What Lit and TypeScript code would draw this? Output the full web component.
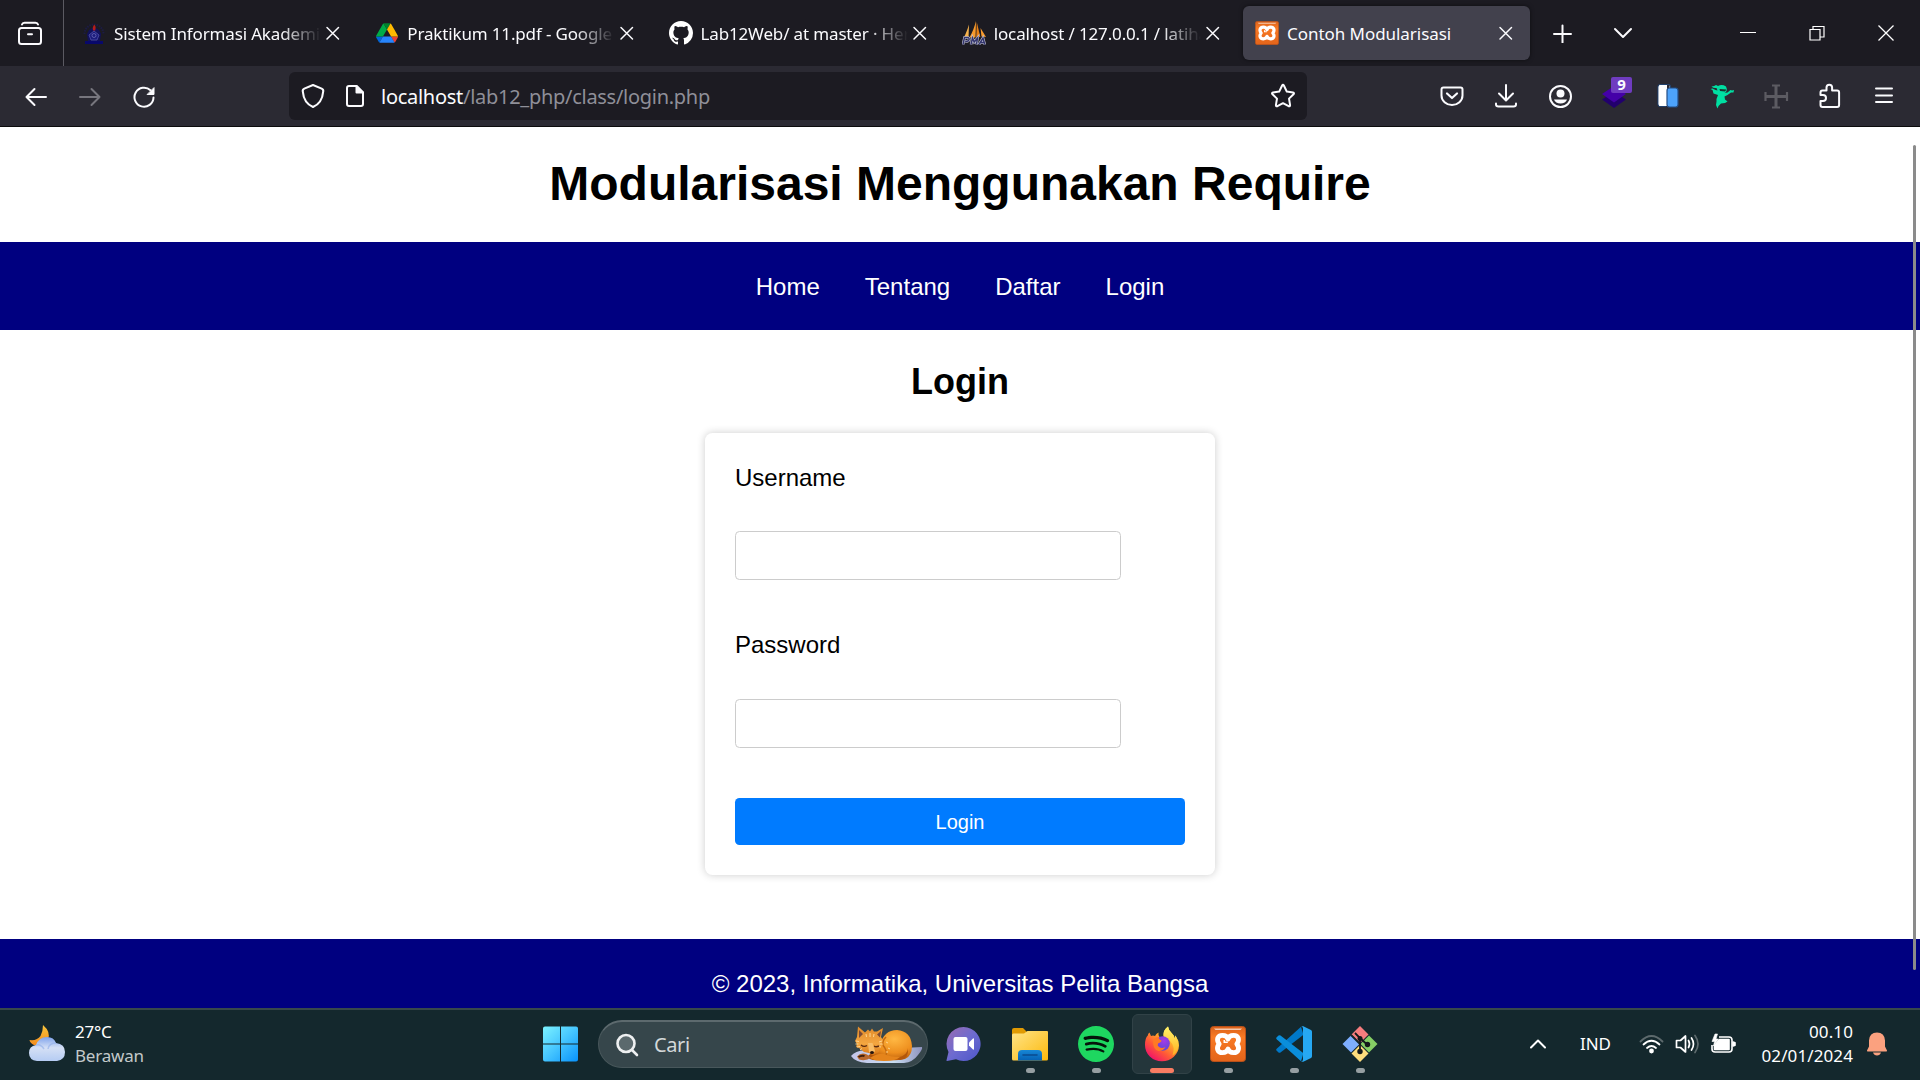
import { LitElement, html, css, TemplateResult } from "lit";
import { customElement } from "lit/decorators.js";

const xampp = (size: number, id: string) => html`<svg width=${size} height=${size} viewBox="0 0 36 36" fill="none">
  <defs><linearGradient id=${id} x1="0" y1="0" x2="0" y2="1"><stop offset="0" stop-color="#d9611a"/><stop offset=".3" stop-color="#f97a24"/><stop offset="1" stop-color="#e3641a"/></linearGradient></defs>
  <rect x=".5" y=".5" width="35" height="35" rx="3" fill="url(#${id})" stroke="#b8501a"/>
  <path d="M4 2.500h28l-1.500 1.500h-25z" fill="#fff" opacity=".65"/>
  <path d="M18 13C17 10 15 9.300 12.500 9.300C7.500 9.300 6 14 9.200 18C6 22 7.500 26.700 12.500 26.700C15 26.700 17 26 18 23C19 26 21 26.700 23.500 26.700C28.500 26.700 30 22 26.800 18C30 14 28.500 9.300 23.500 9.300C21 9.300 19 10 18 13Z" stroke="#fff" stroke-width="4.800" stroke-linejoin="round"/>
  <path d="M14.300 14v2.200h3.500" stroke="#fff" stroke-width="1.600"/>
</svg>`;

const campus = html`<svg width="24" height="24" viewBox="0 0 24 24" fill="none">
  <path d="M2.500 13A9.500 9.500 0 0 1 21.500 13" stroke="#1c1c45" stroke-width="2" stroke-dasharray="1.500 1"/>
  <path d="M7 9l5-3 5 3 2 4-1 7H6l-1-7z" fill="#11115c"/>
  <path d="M12 10l5 4-2 5H9l-2-5z" fill="#1c1c7c" stroke="#4a4aa4" stroke-width=".9"/>
  <circle cx="12" cy="14.500" r="2" stroke="#6a6ab8" stroke-width=".8"/>
  <path d="M3 20h18v3H3z" fill="#08086b"/><path d="M12.200 3.500c2 2 1.500 3.500 1 6h-2c-1-2-.5-3.500 1-6z" fill="#b51c1c"/>
</svg>`;

const drive = html`<svg width="24" height="24" viewBox="-4 -4 95.300 86">
  <path fill="#0066da" d="M6.600 66.850l3.850 6.650c.8 1.400 1.950 2.500 3.300 3.300l13.750-23.800H0c0 1.550.4 3.100 1.200 4.500z"/>
  <path fill="#00ac47" d="M43.650 25L29.900 1.200c-1.350.8-2.500 1.900-3.300 3.300l-25.400 44A9.060 9.060 0 0 0 0 53h27.500z"/>
  <path fill="#ea4335" d="M73.550 76.800c1.350-.8 2.500-1.900 3.300-3.300l1.600-2.750 7.650-13.250c.8-1.400 1.200-2.950 1.200-4.500H59.798l5.852 11.500z"/>
  <path fill="#00832d" d="M43.650 25L57.400 1.200C56.050.4 54.500 0 52.900 0H34.400c-1.600 0-3.150.45-4.500 1.200z"/>
  <path fill="#2684fc" d="M59.800 53H27.500L13.750 76.800c1.350.8 2.900 1.200 4.500 1.200h50.800c1.600 0 3.150-.45 4.500-1.200z"/>
  <path fill="#ffba00" d="M73.400 26.500l-12.700-22c-.8-1.400-1.950-2.500-3.300-3.300L43.650 25 59.800 53h27.450c0-1.550-.4-3.100-1.200-4.500z"/>
</svg>`;

const github = html`<svg width="24" height="24" viewBox="0 0 16 16" fill="#fff"><path d="M8 0C3.580 0 0 3.580 0 8c0 3.540 2.290 6.530 5.470 7.590.4.070.55-.17.55-.38 0-.19-.01-.82-.01-1.490-2.010.37-2.530-.49-2.690-.94-.09-.23-.48-.94-.82-1.130-.28-.15-.68-.52-.01-.53.63-.01 1.080.58 1.230.82.72 1.210 1.870.87 2.330.66.070-.52.28-.87.51-1.070-1.780-.2-3.640-.89-3.640-3.950 0-.87.31-1.590.82-2.150-.08-.2-.36-1.020.08-2.120 0 0 .67-.21 2.200.82.64-.18 1.320-.27 2-.27s1.360.09 2 .27c1.530-1.040 2.200-.82 2.200-.82.44 1.100.16 1.920.08 2.120.51.56.82 1.270.82 2.150 0 3.070-1.870 3.750-3.650 3.950.29.25.54.73.54 1.480 0 1.070-.01 1.930-.01 2.200 0 .21.15.46.55.38A8.013 8.013 0 0 0 16 8c0-4.420-3.580-8-8-8z"/></svg>`;

const pma = html`<svg width="24" height="24" viewBox="0 0 24 24">
  <path d="M7 3.500L6.500 17H1.500C4 12.500 5.500 8 7 3.500z" fill="#f6b34e"/>
  <path d="M14 0l-.5 16.500H7.500C10.500 11 12.500 6 14 0z" fill="#f79a2c"/>
  <path d="M14.800 1l3.500 15h-4z" fill="#e97f12"/><path d="M18.500 7L24 16l-4.500-.5z" fill="#f79a2c"/>
  <path d="M1 23.500l1.500-7h3q2 .2 1.600 2t-2.600 2H3.200M9 23.500l1.500-6.500 1.700 4 3.300-4-1 6.500M17 23.500l4-6.500 1.800 6.500M18.500 21.500h3.700" fill="none" stroke="#c9cadb" stroke-width="2.600"/>
  <path d="M1 23.500l1.500-7h3q2 .2 1.600 2t-2.600 2H3.200M9 23.500l1.500-6.500 1.700 4 3.300-4-1 6.500M17 23.500l4-6.500 1.800 6.500M18.500 21.500h3.700" fill="none" stroke="#34366e" stroke-width="1.500"/>
</svg>`;

const tabClose = html`<svg width="24" height="24" viewBox="0 0 24 24" fill="none" stroke="#fbfbfe" stroke-width="1.500" stroke-linecap="round"><path d="M6 6.500l11.500 11.500M17.500 6.500L6 18"/></svg>`;

const shield = html`<svg width="24" height="26" viewBox="0 0 24 26" fill="none" stroke="#fbfbfe" stroke-width="2.100" stroke-linejoin="round"><path d="M12 2L20.700 5.600Q22.600 6.400 22.200 8.500C21.600 15.500 19 21 12 24C5 21 2.400 15.500 1.800 8.500Q1.400 6.400 3.300 5.600Z"/></svg>`;
const doc = html`<svg width="20" height="24" viewBox="0 0 20 24" fill="none" stroke="#fbfbfe" stroke-width="2" stroke-linejoin="round"><path d="M4 2h7.500l6.500 6.500V20q0 2-2 2H4q-2 0-2-2V4q0-2 2-2z"/><path d="M11.500 2v6.500H18z" fill="#fbfbfe"/></svg>`;
const star = html`<svg width="26" height="26" viewBox="0 0 26 26" fill="none" stroke="#fbfbfe" stroke-width="2" stroke-linejoin="round"><path d="M12 2.700q1-1.700 2 0l2.800 5.900 6.200.9q1.700.5.500 1.800l-4.500 4.300 1.100 6.500q0 1.600-1.500 1.100L13 20.200l-5.600 3q-1.500.5-1.500-1.100L7 15.600 2.500 11.300q-1.200-1.300.5-1.800l6.200-.9z"/></svg>`;

const extensions: TemplateResult[] = [
  html`<svg width="26" height="26" viewBox="0 0 26 26" fill="none" stroke="#fbfbfe" stroke-width="2" stroke-linecap="round" stroke-linejoin="round"><path d="M4.500 4.500h17q2 0 2 2v6a10.500 9.500 0 0 1-21 0V6.500q0-2 2-2z"/><path d="M8 10.500l5 4.500 5-4.500" stroke-width="2.200"/></svg>`,
  html`<svg width="26" height="26" viewBox="0 0 26 26" fill="none" stroke="#fbfbfe" stroke-width="2" stroke-linecap="round" stroke-linejoin="round"><path d="M13 2v15M6 10.500l7 7 7-7M3 20.500v1q0 2 2.500 2h15q2.500 0 2.500-2v-1"/></svg>`,
  html`<svg width="26" height="26" viewBox="0 0 26 26" fill="none"><circle cx="13.500" cy="13.500" r="10.500" stroke="#fbfbfe" stroke-width="2"/><circle cx="13.500" cy="10.500" r="4" fill="#fbfbfe"/><path d="M7 16.500h13q-1.500 4-6.500 4t-6.500-4z" fill="#fbfbfe"/></svg>`,
  html`<svg width="26" height="26" viewBox="0 0 26 26"><path d="M13 8.500l12 8-12 8.500-12-8.500z" fill="#22006d"/><path d="M13 3l12 8-12 8.500-12-8.500z" fill="#4400a8"/></svg><span class="count">9</span>`,
  html`<svg width="26" height="26" viewBox="0 0 26 26"><rect x="3" y="1.500" width="12.500" height="22" rx="2.500" fill="#fff" stroke="#20406c" stroke-width="1.200"/><path d="M11 2h3.500v22H11z" fill="#2b2a33"/><path d="M3.700 3.500q0-1.500 1.500-1.500H12v21H5.200q-1.500 0-1.500-1.500z" fill="#fff"/><rect x="12" y="5" width="11" height="19" rx="2.500" fill="#4da3fb" stroke="#254f86" stroke-width="1.200"/></svg>`,
  html`<svg width="26" height="26" viewBox="0 0 26 26" fill="#00dfa2"><path d="M2.500 3.500q3-.3 4.500-1.500l2 1q4-2 8 .5l1 3q-.5 2.500-2.500 3.500l3-.5 3-2.500 1.500.5 2-.5-.5 2.500-2.500 0-3.500 2.500-3 1.500.5 3 2.500 2-2.500 1.500-4 .5-2.500 2.500-1 2.500-1.500-3.500.5-3.500L7.500 16l1.500-4-4.500-1.500L3.500 7l-2-1 2-.5 3 1.500 2 .5-1-2.500q-3 .5-5-1.500z"/><path d="M10.500 6l7 .5-1.500 2-5-.5z" fill="#17342f"/></svg>`,
  html`<svg width="26" height="26" viewBox="0 0 26 26" fill="none" stroke="#5c5b62" stroke-width="2"><path d="M13 2v23M2 13.500h23" stroke-width="3"/><path d="M9 2.500h8M9 24.500h8M2.500 9v9M24 9v9" stroke-width="2.200"/></svg>`,
  html`<svg width="26" height="26" viewBox="0 0 26 26" fill="none" stroke="#fbfbfe" stroke-width="2" stroke-linejoin="round"><path d="M3.500 12V9.500q0-2 2-2H9.500V4.500a2.800 2.800 0 0 1 5.600 0V7.500h5q2 0 2 2V22q0 2-2 2h-14.600q-2 0-2-2v-4H6a3 3 0 0 0 0-6H3.500z"/></svg>`,
  html`<svg width="26" height="26" viewBox="0 0 26 26" fill="none" stroke="#fbfbfe" stroke-width="2" stroke-linecap="round"><path d="M5 5.500h16M5 12.500h16M5 19h16"/></svg>`,
];

const fox = html`<svg width="74" height="40" viewBox="0 0 74 40">
  <defs>
    <radialGradient id="fur" cx=".6" cy=".3" r=".75"><stop offset="0" stop-color="#ffb843"/><stop offset=".6" stop-color="#ee8f1e"/><stop offset="1" stop-color="#b2560a"/></radialGradient>
    <linearGradient id="face" x1="0" y1="0" x2="0" y2="1"><stop offset="0" stop-color="#e08a2a"/><stop offset=".6" stop-color="#f4a640"/><stop offset="1" stop-color="#d87818"/></linearGradient>
    <linearGradient id="mat" x1="0" x2="1"><stop offset="0" stop-color="#c2c4e8"/><stop offset=".6" stop-color="#c9def2"/><stop offset="1" stop-color="#8f93bd"/></linearGradient>
  </defs>
  <path d="M1 31q4-5 14-6l57-3q1 2-4 8-5 7-14 8H17Q5 37 1 31z" fill="url(#mat)"/>
  <path d="M30 20Q34 5 47 5q14 1 15 16 0 10-7 13-8 2-24 1-14 1-13-4z" fill="url(#fur)"/>
  <path d="M32 19q6 7 4 12M36 12q-4 4-3 8" stroke="#c36a10" stroke-width="1.500" fill="none"/>
  <path d="M44 33q13-1 14-10 1 11-8 12z" fill="#b3570b"/>
  <path d="M5 16l2-4L8 1.500l7 6 3-3 2 2 2-3 2 3 3 0L33 3l-2 9 2 3-1 3 1 2-3 3-1 4-6 3-4-2-5-1-5-4-3-1 1-3z" fill="url(#face)"/>
  <path d="M9 5l4 4-4 4zM31 6l-4 3.500 3 3z" fill="#7b4a35"/>
  <path d="M6 16l3 .5M5.500 19l3 0M7 22l3-.5M10 25l2-1.500M16 9l.5 3M20 8v4M24 9l-.5 3M32 16l-3 1M32.500 19l-3 0M31 22l-3-.5M36 17l2 1M38 23l2 1M36 27l2 0" stroke="#ffd590" stroke-width="1" fill="none"/>
  <path d="M11 20q3 2.500 6 .5M24 21q2 1.500 5 0" stroke="#5a2a10" stroke-width="1.400" fill="none"/>
  <path d="M18 18h4.500l2.500 8-2 3-4-2z" fill="#f8bd68"/><ellipse cx="22" cy="27.500" rx="2" ry="1.600" fill="#24130d"/>
  <path d="M7 31.500q4-4.500 10-2l4 3q-5 4-12 2z" fill="#b9692e"/><path d="M8.500 32q3-2 6-1" stroke="#40200f" stroke-width="2" fill="none"/>
  <path d="M20 33q8-5 14-4 6 3 16 3-4 4-16 4-10 0-14-3z" fill="#e5841b"/>
</svg>`;

const chat = html`<svg width="36" height="36" viewBox="0 0 36 36"><defs><linearGradient id="cg" x1="0" y1="0" x2="1" y2="1"><stop offset="0" stop-color="#9b6bb0"/><stop offset=".5" stop-color="#6d6bd0"/><stop offset="1" stop-color="#4c55c8"/></linearGradient></defs>
  <path d="M17.500 1a17 17 0 1 1-7.500 32.200L1 35q-.7 0-.5-.8L2.500 26A17 17 0 0 1 17.500 1z" fill="url(#cg)"/><rect x="7.500" y="11" width="14" height="14" rx="2" fill="#fff"/><path d="M23 16.500l4-4q1-.5 1 .8v9.500q0 1.300-1 .8l-4-4z" fill="#fff"/></svg>`;
const folder = html`<svg width="36" height="36" viewBox="0 0 36 36"><defs><linearGradient id="fg" x1="0" y1="0" x2="1" y2="1"><stop offset="0" stop-color="#ffe488"/><stop offset="1" stop-color="#fcb90c"/></linearGradient><linearGradient id="fb" x1="0" y1="0" x2="0" y2="1"><stop offset="0" stop-color="#1787d6"/><stop offset="1" stop-color="#0561b4"/></linearGradient></defs>
  <path d="M0 4q0-2 2-2h9l4 4v8H0z" fill="#e09a03"/><path d="M0 9q0-1.500 1.500-1.500H12L15.500 5H35q1 0 1 1v27q0 1.500-1.500 1.500h-33Q0 34.500 0 33z" fill="url(#fg)"/><path d="M6 34.500V28q0-4 4-4h16q4 0 4 4v6.500z" fill="url(#fb)"/><path d="M11 29h14" stroke="#0a4b8f" stroke-width="1.600" stroke-linecap="round"/></svg>`;
const spotify = html`<svg width="36" height="36" viewBox="0 0 24 24"><circle cx="12" cy="12" r="11" fill="#06140b"/><path fill="#1ed760" d="M12 0C5.400 0 0 5.400 0 12s5.400 12 12 12 12-5.400 12-12S18.660 0 12 0zm5.521 17.340c-.24.359-.66.48-1.021.24-2.820-1.740-6.360-2.101-10.561-1.141-.418.122-.779-.179-.899-.539-.12-.421.18-.78.54-.9 4.560-1.021 8.520-.6 11.640 1.320.42.18.479.659.301 1.020zm1.440-3.300c-.301.42-.841.6-1.262.3-3.239-1.980-8.159-2.580-11.939-1.380-.479.12-1.020-.12-1.140-.6-.12-.48.12-1.021.6-1.141C9.600 9.900 15 10.561 18.720 12.840c.361.181.54.78.241 1.200zm.12-3.360C15.240 8.400 8.820 8.160 5.160 9.301c-.6.179-1.200-.181-1.380-.721-.18-.601.18-1.200.72-1.381 4.260-1.260 11.280-1.020 15.721 1.621.539.3.719 1.020.419 1.560-.299.421-1.020.599-1.559.3z"/></svg>`;
const firefox = html`<svg width="36" height="36" viewBox="0 0 36 36"><defs>
  <linearGradient id="ff" x1=".85" y1=".1" x2=".2" y2=".95"><stop offset="0" stop-color="#fff14f"/><stop offset=".35" stop-color="#ffa62b"/><stop offset=".65" stop-color="#ff5a36"/><stop offset="1" stop-color="#f0106c"/></linearGradient>
  <radialGradient id="fp" cx=".6" cy=".3" r=".7"><stop offset="0" stop-color="#a53be6"/><stop offset="1" stop-color="#5a47d6"/></radialGradient>
  <linearGradient id="fy" x1="0" y1="0" x2="0" y2="1"><stop offset="0" stop-color="#fff36b"/><stop offset="1" stop-color="#ffb01f"/></linearGradient></defs>
  <path d="M5.500 6.500L7 10q2-.8 4 0 1-2.500 3.500-3.500-.5 3 1 4.500h4Q19 4 24 .5q.5 4 4 7 2 1.500 2.500 5l1-3q3.500 5 3.500 10A17 16 0 0 1 1 19Q1 12 3.800 9.500q.2-2 1.700-3z" fill="url(#ff)"/>
  <path d="M24 .5q.5 4 4 7 2 1.500 2.500 5l1-3q3 5 3 10-1 7-6 10 3-9-2-14-6-3-7-6Q19 4 24 .5z" fill="url(#fy)"/>
  <circle cx="18.500" cy="17.500" r="7.300" fill="url(#fp)"/>
  <path d="M9 15q1-4 6-4-1 2 2.500 3.500.2 1.500-3.500 3-1 2 1 3.500 3 2 6.500 0-2 4-7 4Q9 24 9 15z" fill="#ff7a24"/></svg>`;
const vscode = html`<svg width="36" height="36" viewBox="0 0 36 36"><path d="M25 .8l2.500 8L4.500 26.500q-1 .7-2 0L.7 24.800q-1-1 0-2z" fill="#0078c8"/><path d="M.7 13.200q-1-1 0-2l1.800-1.700q1-.7 2 0L27.500 27.200 25 35.200z" fill="#0a8edb"/><path d="M25 .7Q26 0 27.300.3L35 4q1 .5 1 1.700v24.600q0 1.200-1 1.700l-7.700 3.700q-1.300.3-2.300-.7 2 .5 2-1.500v-31Q27 .3 25 .7z" fill="#26a8f3"/></svg>`;
const git = html`<svg width="36" height="36" viewBox="0 0 36 36"><path d="M18 0l8.500 8.500-8.500 8.500-8.500-8.500z" fill="#f77d7e"/><path d="M9 9.500l8.500 8.500L9 26.500.5 18z" fill="#7eaeff"/><path d="M27 9.500l8.500 8.500-8.500 8.500-8.500-8.500z" fill="#86ce65"/><path d="M18 19l8.500 8.500L18 36l-8.500-8.500z" fill="#ffde7d"/><path d="M9 9l9 9" stroke="#14282d" stroke-width="1.800"/><path d="M13 7l5 5v13M18 12l7 6.500" stroke="#15191b" stroke-width="1.800" fill="none"/><circle cx="18" cy="12.500" r="2.500" fill="#15191b"/><circle cx="18" cy="25.500" r="2.700" fill="#15191b"/><circle cx="25.500" cy="18.500" r="2.700" fill="#15191b"/></svg>`;

interface Tab { icon: TemplateResult; title: string; active?: boolean }
const tabs: Tab[] = [
  { icon: campus, title: "Sistem Informasi Akademik" },
  { icon: drive, title: "Praktikum 11.pdf - Google Drive" },
  { icon: github, title: "Lab12Web/ at master · Herli" },
  { icon: pma, title: "localhost / 127.0.0.1 / latihan" },
  { icon: xampp(24, "xs"), title: "Contoh Modularisasi", active: true },
];

@customElement("browser-chrome")
class BrowserChrome extends LitElement {
  static styles = css`
    :host { display: block; font-family: "Noto Sans", sans-serif; color: #fbfbfe; }
    svg { display: block; flex: none; }
    .strip { display: flex; height: 66px; background: #1c1b22; align-items: center; }
    .view { width: 64px; height: 66px; border-right: 1px solid #5b5a62; display: flex; align-items: center; padding-left: 16px; box-sizing: border-box; flex: none; }
    .tabs { display: flex; gap: 6px; padding-left: 6px; flex: none; }
    .tab { box-sizing: border-box; width: 287.250px; height: 54px; border-radius: 6px; padding: 0 12px; display: flex; align-items: center; }
    .active { background: #42414d; box-shadow: 0 0 4px #0008; }
    .title { flex: 1; min-width: 0; margin-left: 8px; padding-top: 1px; overflow: hidden; white-space: nowrap; font-size: 17px; line-height: 26px; letter-spacing: -0.15px; mask-image: linear-gradient(to left, transparent, #000 40px); }
    .active .title { mask-image: none; letter-spacing: -0.05px; }
    .caps { display: flex; flex: 1; align-items: center; }
    .plus { margin-left: 22px; }
    .list { margin-left: 41px; }
    .min { margin-left: 107px; }
    .max { margin-left: 53px; }
    .shut { margin-left: 53px; }
    .bar { display: flex; align-items: center; height: 60px; background: #2b2a33; border-bottom: 1px solid #0c0c0d; padding-right: 9px; }
    .nav { display: flex; width: 289px; gap: 30px; padding-left: 24px; box-sizing: border-box; flex: none; }
    .url { width: 1018px; height: 48px; box-sizing: border-box; background: #1c1b22; border-radius: 6px; display: flex; align-items: center; padding: 0 11px 0 12px; flex: none; }
    .address { flex: 1; margin-left: 16px; padding-top: 1px; font-size: 20px; line-height: 30px; color: #8f8f98; white-space: nowrap; letter-spacing: -0.280px; }
    .host { color: #fbfbfe; }
    .doc { margin-left: 20px; display: flex; }
    .ext { margin-left: auto; display: flex; }
    .slot { width: 54px; display: flex; justify-content: center; position: relative; }
    .count { position: absolute; left: 24px; top: -6px; width: 21px; height: 16px; border-radius: 2px; background: #6f3cc0; font-size: 15px; font-weight: 700; line-height: 15px; text-align: center; }
  `;
  render() {
    return html`
      <div class="strip">
        <div class="view"><svg width="28" height="28" viewBox="0 0 28 28" fill="none" stroke="#fbfbfe" stroke-width="2" stroke-linecap="round"><rect x="3" y="9" width="22" height="16" rx="2.500"/><path d="M6 5.500q.5-1.800 2.500-1.800h11q2 0 2.500 1.800M12 15.200h4"/></svg></div>
        <div class="tabs">${tabs.map(t => html`<div class="tab ${t.active ? "active" : ""}">${t.icon}<span class="title">${t.title}</span>${tabClose}</div>`)}</div>
        <div class="caps">
          <svg class="plus" width="20" height="20" viewBox="0 0 20 20" fill="none" stroke="#fbfbfe" stroke-width="2" stroke-linecap="round"><path d="M10.500 2.500v17M2 11h17"/></svg>
          <svg class="list" width="20" height="20" viewBox="0 0 20 20" fill="none" stroke="#fbfbfe" stroke-width="2" stroke-linecap="round" stroke-linejoin="round"><path d="M2 6l8 8 8-8"/></svg>
          <svg class="min" width="16" height="16" viewBox="0 0 16 16" stroke="#fff"><path d="M0 7.500h16"/></svg>
          <svg class="max" width="16" height="16" viewBox="0 0 16 16" fill="none" stroke="#fff" stroke-width="1.200"><path d="M1 4.500h10v10.500H1zM4 4.500V1.500h11v10.500h-4"/></svg>
          <svg class="shut" width="16" height="16" viewBox="0 0 16 16" stroke="#fff" stroke-width="1.300"><path d="M.5.5l15 15M15.500.5l-15 15"/></svg>
        </div>
      </div>
      <div class="bar">
        <div class="nav">
          <svg width="24" height="24" viewBox="0 0 24 24" fill="none" stroke="#fbfbfe" stroke-width="2" stroke-linecap="round" stroke-linejoin="round"><path d="M22 13H2.500M10.500 5l-8 8 8 8"/></svg>
          <svg width="24" height="24" viewBox="0 0 24 24" fill="none" stroke="#77767e" stroke-width="2" stroke-linecap="round" stroke-linejoin="round"><path d="M2 13h19.500M13.500 5l8 8-8 8"/></svg>
          <svg width="24" height="24" viewBox="0 0 24 24" fill="none" stroke="#fbfbfe" stroke-width="2" stroke-linecap="round"><path d="M21.500 13.500a9.500 9.500 0 1 1-3-7.200"/><path d="M22 4v6.500h-6.500z" fill="#fbfbfe" stroke-width="1"/></svg>
        </div>
        <div class="url">${shield}<span class="doc">${doc}</span><span class="address"><span class="host">localhost</span>/lab12_php/class/login.php</span>${star}</div>
        <div class="ext">${extensions.map(e => html`<div class="slot">${e}</div>`)}</div>
      </div>`;
  }
}

@customElement("login-page")
class LoginPage extends LitElement {
  static styles = css`
    :host { display: flex; flex-direction: column; position: relative; background: #fff; color: #000; font: 24px/29px "Liberation Sans", Arial, sans-serif; overflow: hidden; }
    h1, h2 { margin: 0; text-align: center; font-weight: 700; flex: none; }
    h1 { font-size: 48px; line-height: 113px; height: 115px; }
    h2 { font-size: 36px; line-height: 103px; height: 103px; }
    .menu { height: 88px; flex: none; background: #000080; display: flex; justify-content: center; align-items: center; gap: 45px; color: #fff; }
    .card { box-sizing: border-box; width: 510px; height: 442px; flex: none; margin: 0 auto; padding: 30px; border-radius: 7.500px; box-shadow: 0 0 9px rgba(0, 0, 0, 0.2); display: flex; flex-direction: column; align-items: flex-start; }
    .field { box-sizing: border-box; width: 386px; height: 49px; margin: 39px 0 50px; border: 1px solid #ccc; border-radius: 4.500px; background: #fff; padding: 12px; font: inherit; outline: none; flex: none; }
    .second { margin-top: 40px; }
    .submit { width: 450px; height: 47px; border: 0; border-radius: 4.500px; background: #007bff; color: #fff; font: 20px "Liberation Sans", Arial, sans-serif; padding: 2px 0 0; flex: none; }
    .foot { flex: 1; margin-top: 64px; padding-top: 30px; background: #000080; color: #fff; text-align: center; }
    .thumb { position: absolute; right: 4px; top: 18px; width: 3px; height: 825px; border-radius: 2px; background: #8b8b8b; }
  `;
  render() {
    return html`
      <h1>Modularisasi Menggunakan Require</h1>
      <nav class="menu">${["Home", "Tentang", "Daftar", "Login"].map(l => html`<span>${l}</span>`)}</nav>
      <h2>Login</h2>
      <form class="card">
        <label>Username</label><input class="field" type="text" />
        <label>Password</label><input class="field second" type="password" />
        <button class="submit" type="button">Login</button>
      </form>
      <footer class="foot">© 2023, Informatika, Universitas Pelita Bangsa</footer>
      <div class="thumb"></div>`;
  }
}

const apps = [
  { icon: chat, run: "" }, { icon: folder, run: "dot" }, { icon: spotify, run: "dot" }, { icon: firefox, run: "dot now" },
  { icon: xampp(36, "xl"), run: "dot" }, { icon: vscode, run: "dot" }, { icon: git, run: "dot" },
];

@customElement("task-bar")
class TaskBar extends LitElement {
  static styles = css`
    :host { display: flex; align-items: center; box-sizing: border-box; height: 72px; border-top: 2px solid #37484a; padding-bottom: 2px; background: #14282d; color: #fff; font: 17px/24px "Noto Sans", sans-serif; }
    svg { display: block; flex: none; }
    .weather { display: flex; align-items: center; width: 543px; padding-left: 28px; box-sizing: border-box; gap: 9px; flex: none; letter-spacing: -0.2px; }
    .sky { color: #c3c9ca; }
    .search { box-sizing: border-box; width: 330px; height: 48px; margin-left: 20px; border-radius: 24px; background: #36464b; border: 1px solid #48575b; border-top: 2px solid #5d6a6e; display: flex; align-items: center; padding: 0 3px 0 16px; color: #d3d8d9; font-size: 20px; flex: none; }
    .hint { flex: 1; margin-left: 15px; letter-spacing: -0.4px; }
    .apps { display: flex; gap: 6px; margin-left: 6px; }
    .app { box-sizing: border-box; width: 60px; height: 60px; border: 1px solid transparent; border-radius: 6px; display: flex; flex-direction: column; align-items: center; padding-top: 11px; }
    .focus { background: #24363b; border-color: #314247; }
    .dot { width: 9px; height: 5px; border-radius: 2.500px; background: #969fa2; margin-top: 6px; flex: none; }
    .now { width: 24px; background: #f97c62; }
    .tray { display: flex; align-items: center; margin-left: auto; padding-right: 32px; }
    .lang { margin: 0 28px 0 34px; }
    .status { display: flex; gap: 11px; }
    .clock { width: 100px; text-align: right; margin: 0 13px 0 17px; letter-spacing: 0.1px; }
  `;
  render() {
    return html`
      <div class="weather">
        <svg width="38" height="38" viewBox="0 0 38 38"><defs><linearGradient id="w" x1="0" y1="0" x2="0" y2="1"><stop offset="0" stop-color="#7fa3ec"/><stop offset=".45" stop-color="#d5e0f5"/><stop offset="1" stop-color="#b5ccf3"/></linearGradient><linearGradient id="m" x1="0" y1="0" x2="0" y2="1"><stop offset="0" stop-color="#f8c53c"/><stop offset="1" stop-color="#f48b1c"/></linearGradient></defs>
          <path d="M15 0q8 7 5 14-5 9-14 6-4-2-4.500-5Q9 16 12.500 11 15 6 15 0z" fill="url(#m)"/><path d="M9 36q-8-1-8-8t7-8q3-8 11-8 7 0 9 6 9 1 9 9t-8 9z" fill="url(#w)"/><path d="M8 20q5-1 8 4M20 24q1-6 8-6" stroke="#8faeea" stroke-width="1.500" fill="none" opacity=".6"/></svg>
        <div><div>27°C</div><div class="sky">Berawan</div></div>
      </div>
      <svg width="35" height="36" viewBox="0 0 35 36"><defs><linearGradient id="win" gradientUnits="userSpaceOnUse" x1="0" y1="0" x2="35" y2="36"><stop offset="0" stop-color="#7df3ff"/><stop offset=".5" stop-color="#45c5ff"/><stop offset="1" stop-color="#0791fb"/></linearGradient></defs><path d="M2 .5h15v17H0v-15q0-2 2-2zM18 .5h15q2 0 2 2v15H18zM0 18.500h17v17H2q-2 0-2-2zM18 18.500h17v15q0 2-2 2H18z" fill="url(#win)"/></svg>
      <div class="search">
        <svg width="24" height="24" viewBox="0 0 24 24" fill="#5b696d" stroke="#eef0f1" stroke-width="2.600" stroke-linecap="round"><circle cx="11" cy="10.500" r="8.500"/><path d="M17 17l5 5"/></svg>
        <span class="hint">Cari</span>${fox}
      </div>
      <div class="apps">${apps.map(a => html`<div class="app ${a.run.includes("now") ? "focus" : ""}">${a.icon}${a.run ? html`<span class=${a.run}></span>` : ""}</div>`)}</div>
      <div class="tray">
        <svg width="16" height="12" viewBox="0 0 16 12" fill="none" stroke="#fff" stroke-width="2" stroke-linecap="round" stroke-linejoin="round"><path d="M1 9.500l7-7 7 7"/></svg>
        <span class="lang">IND</span>
        <div class="status">
          <svg width="25" height="24" viewBox="0 0 25 24" fill="none" stroke="#fff" stroke-width="1.800" stroke-linecap="round"><path d="M1.500 9.500q11-11 22 0" stroke="#5d6a6d"/><path d="M4.500 12.500q8-7.500 16 0M8 16q4.500-4 9 0"/><circle cx="12.500" cy="19" r="1.500" fill="#fff"/></svg>
          <svg width="25" height="24" viewBox="0 0 25 24" fill="none" stroke="#fff" stroke-width="1.700" stroke-linecap="round" stroke-linejoin="round"><path d="M1.500 8.500h4l5-4.500v16l-5-4.500h-4zM13.500 8.500q2 3.500 0 7M16.500 6q4 6 0 12"/><path d="M20 3.500q6 8.500 0 17" stroke="#5d6a6d"/></svg>
          <svg width="25" height="24" viewBox="0 0 25 24" fill="none" stroke="#fff" stroke-width="1.600" stroke-linejoin="round"><path d="M8 5h10q3 0 3 3v9q0 3-3 3H4q-3 0-3-3v-4"/><path d="M8.500 7.500h9.500v10H3.500v-4z" fill="#fff"/><path d="M22 10v4l2-.8v-2.400z" fill="#fff"/><path d="M4 2L1 9.500h2.500L2.500 14 7.500 7H5l1.500-5z" fill="#fff" stroke-width=".6"/></svg>
        </div>
        <div class="clock"><div>00.10</div><div>02/01/2024</div></div>
        <svg width="22" height="24" viewBox="0 0 22 24" fill="#fba17f"><path d="M11 .5q7.500 0 8 8v6l2 4q.3 1-.8 1H1.800q-1.100 0-.8-1l2-4v-6q.5-8 8-8zM7 20.500h8q-1 3-4 3t-4-3z"/></svg>
      </div>`;
  }
}

@customElement("app-root")
class AppRoot extends LitElement {
  static styles = css`
    :host { display: flex; flex-direction: column; width: 1920px; height: 1080px; overflow: hidden; }
    browser-chrome, task-bar { flex: none; }
    login-page { flex: 1; min-height: 0; }
  `;
  render() {
    return html`<browser-chrome></browser-chrome><login-page></login-page><task-bar></task-bar>`;
  }
}
